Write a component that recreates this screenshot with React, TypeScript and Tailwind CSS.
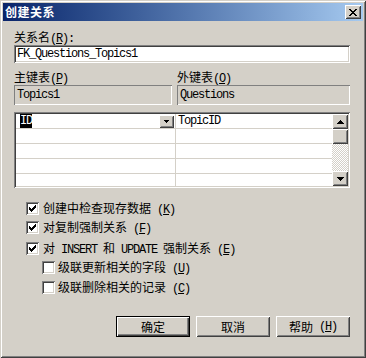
import React from "react";

const raised =
  "shadow-[inset_1px_1px_0_#fff,inset_-1px_-1px_0_#404040,inset_2px_2px_0_#d4d0c8,inset_-2px_-2px_0_#808080]";
const sunken =
  "shadow-[inset_1px_1px_0_#808080,inset_-1px_-1px_0_#fff,inset_2px_2px_0_#404040,inset_-2px_-2px_0_#d4d0c8]";

const mono =
  "font-['Liberation_Mono',monospace] text-[12px] tracking-[-1.2px] whitespace-pre";

function M({ children }: { children?: React.ReactNode }) {
  return <span className={mono}>{children}</span>;
}

function Key({ k, space }: { k: string; space?: boolean }) {
  return (
    <span className={mono}>
      {space ? " " : ""}(<span className="underline underline-offset-[1px]">{k}</span>)
    </span>
  );
}

function Check() {
  return (
    <svg width="7" height="7" viewBox="0 0 7 7" shapeRendering="crispEdges">
      <path
        fill="#000"
        d="M6 0h1v1h-1z M5 1h2v1h-2z M0 2h1v1h-1z M4 2h3v1h-3z M0 3h2v1h-2z M3 3h3v1h-3z M0 4h5v1h-5z M1 5h3v1h-3z M2 6h1v1h-1z"
      />
    </svg>
  );
}

function CheckBox({ checked }: { checked: boolean }) {
  return (
    <div className={`w-[13px] h-[13px] bg-white ${sunken} flex items-center justify-center shrink-0`}>
      {checked && <Check />}
    </div>
  );
}

function Arrow({ up, small }: { up?: boolean; small?: boolean }) {
  const d = small
    ? "M0 0h5v1h-5z M1 1h3v1h-3z M2 2h1v1h-1z"
    : "M0 0h7v1h-7z M1 1h5v1h-5z M2 2h3v1h-3z M3 3h1v1h-1z";
  const w = small ? 5 : 7;
  const h = small ? 3 : 4;
  return (
    <svg
      width={w}
      height={h}
      viewBox={`0 0 ${w} ${h}`}
      shapeRendering="crispEdges"
      style={up ? { transform: "scaleY(-1)" } : undefined}
    >
      <path fill="#000" d={d} />
    </svg>
  );
}

function CbRow({
  checked,
  indent,
  mt,
  children,
}: {
  checked: boolean;
  indent?: boolean;
  mt: string;
  children: React.ReactNode;
}) {
  return (
    <div className={`flex items-center h-[13px] ${mt} ${indent ? "pl-[28px]" : "pl-[12px]"}`}>
      <CheckBox checked={checked} />
      <div className={`${indent ? "ml-[3px]" : "ml-[4px]"} leading-[13px] whitespace-nowrap`}>{children}</div>
    </div>
  );
}

export default function App() {
  return (
    <div
      className={`w-[366px] h-[358px] bg-[#d4d0c8] p-[3px] flex flex-col text-black text-[12px] font-['Noto_Sans_CJK_SC','Noto_Sans',sans-serif] shadow-[inset_1px_1px_0_#d4d0c8,inset_-1px_-1px_0_#404040,inset_2px_2px_0_#fff,inset_-2px_-2px_0_#808080] overflow-hidden`}
    >
      {/* Title bar */}
      <div className="h-[18px] flex items-center bg-gradient-to-r from-[#0a246a] to-[#a6caf0] pl-[2px] pr-[2px] shrink-0">
        <span className="text-white font-bold text-[12px] leading-[14px] tracking-[0.5px]">创建关系</span>
        <div className="flex-1" />
        <div className={`w-[16px] h-[14px] bg-[#d4d0c8] ${raised} flex items-center justify-center`}>
          <svg width="8" height="7" viewBox="0 0 8 7" shapeRendering="crispEdges">
            <path
              fill="#000"
              d="M0 0h2v1h-2z M6 0h2v1h-2z M1 1h2v1h-2z M5 1h2v1h-2z M2 2h4v1h-4z M3 3h2v1h-2z M2 4h4v1h-4z M1 5h2v1h-2z M5 5h2v1h-2z M0 6h2v1h-2z M6 6h2v1h-2z"
            />
          </svg>
        </div>
      </div>

      {/* Body */}
      <div className="flex flex-col pl-[11px] pr-[13px]">
        <div className="mt-[9px] h-[14px] leading-[14px] whitespace-nowrap">
          关系名<Key k="R" />
          <M>:</M>
        </div>
        <div className={`mt-[1px] h-[18px] bg-white ${sunken} flex items-center pl-[3px]`}>
          <M>FK_Questions_Topics1</M>
        </div>

        <div className="mt-[7px] grid grid-cols-[158px_1fr] gap-x-[5px]">
          <div className="h-[14px] leading-[14px] whitespace-nowrap">
            主键表<Key k="P" />
          </div>
          <div className="h-[14px] leading-[14px] whitespace-nowrap">
            外键表<Key k="O" />
          </div>
          <div className="mt-[1px] h-[20px] flex items-center pl-[3px] shadow-[inset_1px_1px_0_#808080,inset_-1px_-1px_0_#fff]">
            <M>Topics1</M>
          </div>
          <div className="mt-[1px] h-[20px] flex items-center pl-[3px] shadow-[inset_1px_1px_0_#808080,inset_-1px_-1px_0_#fff]">
            <M>Questions</M>
          </div>
        </div>

        {/* Grid */}
        <div className={`mt-[7px] h-[76px] bg-white ${sunken} p-[2px] flex`}>
          <div className="flex-1 overflow-hidden flex flex-col">
            {[0, 1, 2, 3, 4].map((i) => (
              <div key={i} className="h-[15px] shrink-0 border-b border-[#d4d0c8] flex">
                <div className="w-[160px] border-r border-[#d4d0c8] flex items-stretch pl-[4px] pr-[1px]">
                  {i === 0 && (
                    <>
                      <div className="bg-black text-white flex items-center">
                        <M>ID</M>
                      </div>
                      <div className="flex-1" />
                      <div className={`mt-[1px] w-[15px] h-[13px] bg-[#d4d0c8] ${raised} flex items-center justify-center`}>
                        <Arrow small />
                      </div>
                    </>
                  )}
                </div>
                <div className="flex-1 flex items-center pl-[2px]">
                  {i === 0 && <M>TopicID</M>}
                </div>
              </div>
            ))}
          </div>
          <div className="w-[16px] flex flex-col">
            <div className={`h-[15px] bg-[#d4d0c8] ${raised} flex items-center justify-center`}>
              <Arrow up />
            </div>
            <div className={`h-[15px] bg-[#d4d0c8] ${raised}`} />
            <div className="flex-1 bg-[repeating-conic-gradient(#d4d0c8_0%_25%,#fff_0%_50%)] bg-[length:2px_2px]" />
            <div className={`h-[15px] bg-[#d4d0c8] ${raised} flex items-center justify-center`}>
              <Arrow />
            </div>
          </div>
        </div>

        {/* Checkboxes */}
        <CbRow checked mt="mt-[14px]">
          创建中检查现存数据<Key k="K" space />
        </CbRow>
        <CbRow checked mt="mt-[6px]">
          对复制强制关系<Key k="F" space />
        </CbRow>
        <CbRow checked mt="mt-[8px]">
          对<M> INSERT </M>和<M> UPDATE </M>强制关系<Key k="E" space />
        </CbRow>
        <CbRow checked={false} indent mt="mt-[6px]">
          级联更新相关的字段<Key k="U" space />
        </CbRow>
        <CbRow checked={false} indent mt="mt-[7px]">
          级联删除相关的记录<Key k="C" space />
        </CbRow>

        {/* Buttons */}
        <div className="mt-[22px] flex gap-[6px] pl-[102px]">
          <div className="w-[75px] h-[21px] bg-[#d4d0c8] shadow-[inset_0_0_0_1px_#000,inset_2px_2px_0_#fff,inset_-2px_-2px_0_#404040,inset_-3px_-3px_0_#808080] flex items-center justify-center leading-[14px]">
            确定
          </div>
          <div className={`w-[75px] h-[21px] bg-[#d4d0c8] ${raised} flex items-center justify-center leading-[14px]`}>
            取消
          </div>
          <div className={`w-[75px] h-[21px] bg-[#d4d0c8] ${raised} flex items-center justify-center leading-[14px] whitespace-nowrap`}>
            帮助<Key k="H" space />
          </div>
        </div>
      </div>
    </div>
  );
}
